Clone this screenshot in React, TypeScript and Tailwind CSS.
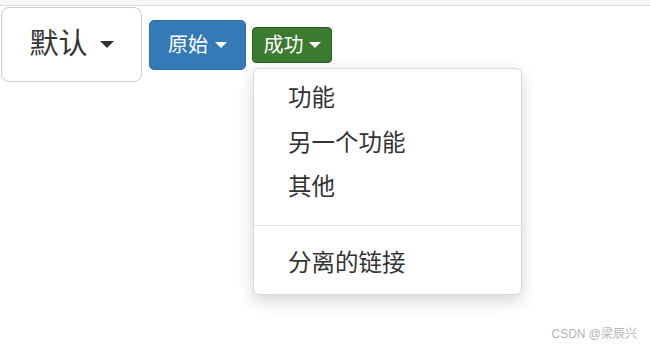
const menuItems = ["功能", "另一个功能", "其他"];

function Caret({ className }: { className: string }) {
  return <span className={"inline-block w-0 h-0 border-x-transparent border-b-0 " + className} />;
}

export default function App() {
  return (
    <div className="relative w-[650px] h-[348px] overflow-hidden bg-white text-[#333] font-['Liberation_Sans','Noto_Sans_CJK_SC',sans-serif]">
      <div className="h-[6px] bg-[#f7f7f7] border-b border-[#dcdcdc]" />

      <div className="flex items-center pt-[1px] pl-[1px]">
        <button className="flex h-[75px] w-[141px] items-center justify-center gap-[12px] rounded-[8px] border border-[#ccc] bg-white text-[29px] leading-none text-[#333]">
          <span>默认</span>
          <Caret className="border-x-[7px] border-t-[7px] border-t-[#333]" />
        </button>

        <button className="ml-[7px] flex h-[50px] w-[97px] items-center justify-center gap-[7px] rounded-[5px] border border-[#2e6da4] bg-[#337ab7] text-[20px] leading-none text-white">
          <span>原始</span>
          <Caret className="border-x-[6px] border-t-[6px] border-t-white" />
        </button>

        <div className="relative ml-[6px]">
          <button className="flex h-[36px] w-[80px] items-center justify-center gap-[5px] rounded-[4px] border border-[#2a5f22] bg-[#3a7b30] text-[20px] leading-none text-white">
            <span>成功</span>
            <Caret className="border-x-[6px] border-t-[6px] border-t-white" />
          </button>

          <div className="absolute left-[1px] top-[41px] w-[269px] rounded-[6px] border border-[rgba(0,0,0,0.15)] bg-white py-2 shadow-[0_6px_16px_rgba(0,0,0,0.17)]">
            {menuItems.map((item) => (
              <div key={item} className="flex h-[44.5px] items-center pl-[34px] text-[23.5px] leading-none text-[#333]">
                {item}
              </div>
            ))}
            <div className="my-[15px] h-px bg-[#e5e5e5]" />
            <div className="flex h-[44.5px] items-center pl-[34px] text-[23.5px] leading-none text-[#333]">
              分离的链接
            </div>
          </div>
        </div>
      </div>

      <div className="absolute bottom-[8px] right-[13px] text-[12px] leading-none text-[#b5b5b5]">
        CSDN @梁辰兴
      </div>
    </div>
  );
}
